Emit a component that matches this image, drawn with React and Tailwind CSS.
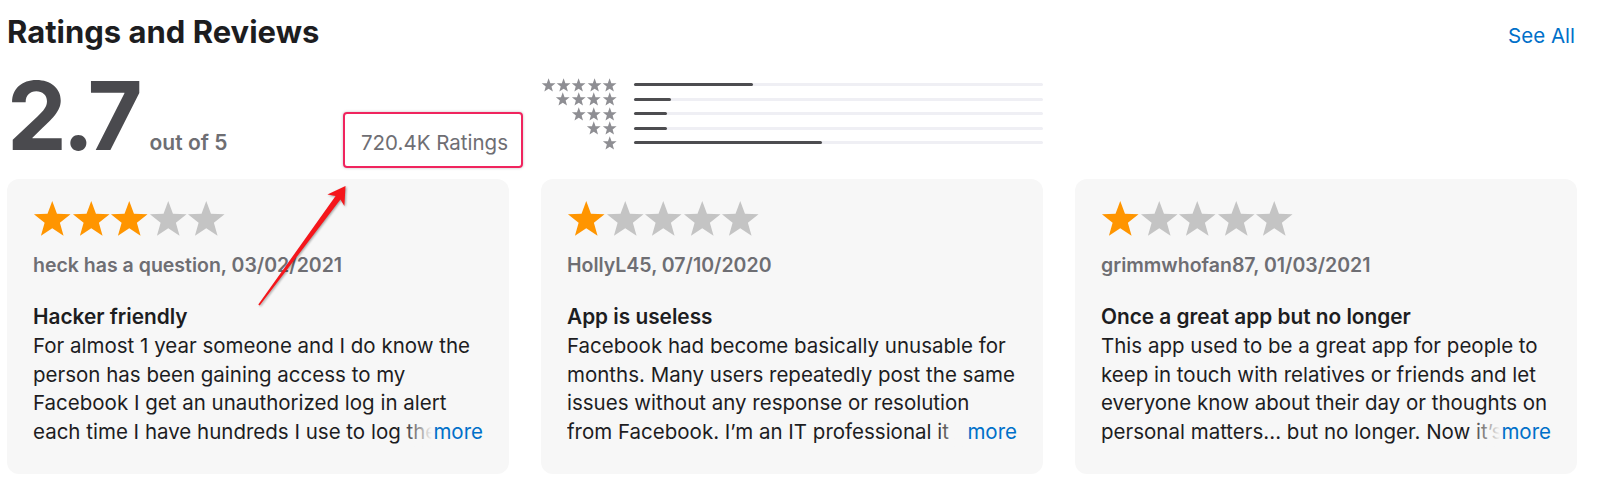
import React from 'react';

// five-point star used by the histogram and the review cards
const STAR_PATH =
  'M12 0.6L14.94 8.56L23.41 8.89L16.76 14.15L19.05 22.31L12 17.6L4.95 22.31L7.24 14.15L0.59 8.89L9.06 8.56Z';

const Star = ({ className }) => (
  <svg viewBox="0 0 24 24" className={className}>
    <path d={STAR_PATH} fill="currentColor" />
  </svg>
);

const histogram = [
  { stars: 5, pct: 29 },
  { stars: 4, pct: 9 },
  { stars: 3, pct: 8 },
  { stars: 2, pct: 8 },
  { stars: 1, pct: 46 },
];

const reviews = [
  {
    rating: 3,
    author: 'heck has a question',
    date: '03/02/2021',
    title: 'Hacker friendly',
    lines: [
      'For almost 1 year someone and I do know the',
      'person has been gaining access to my',
      'Facebook I get an unauthorized log in alert',
      'each time I have hundreds I use to log them',
    ],
  },
  {
    rating: 1,
    author: 'HollyL45',
    date: '07/10/2020',
    title: 'App is useless',
    lines: [
      'Facebook had become basically unusable for',
      'months. Many users repeatedly post the same',
      'issues without any response or resolution',
      'from Facebook. I\u2019m an IT professional it',
    ],
  },
  {
    rating: 1,
    author: 'grimmwhofan87',
    date: '01/03/2021',
    title: 'Once a great app but no longer',
    lines: [
      'This app used to be a great app for people to',
      'keep in touch with relatives or friends and let',
      'everyone know about their day or thoughts on',
      'personal matters... but no longer. Now it\u2019s',
    ],
  },
];

const ReviewCard = ({ review }) => {
  const { rating, author, date, title, lines } = review;
  const last = lines.length - 1;

  return (
    <div className="h-[295px] rounded-[12px] bg-[#f7f7f7] px-[26px] pt-[21px]">
      <div className="flex">
        {[1, 2, 3, 4, 5].map((n) => (
          <Star
            key={n}
            className={`w-[38.5px] h-[38.5px] ${n <= rating ? 'text-[#ff9500]' : 'text-[#c4c4c4]'}`}
          />
        ))}
      </div>
      <div className="mt-[12px] text-[19.5px] leading-[28.7px] font-semibold text-[#6e6e73]">
        {author}, {date}
      </div>
      <div className="mt-[24px] text-[20.8px] leading-[28.7px] font-semibold text-[#1d1d1f]">
        {title}
      </div>
      <div className="text-[20.5px] leading-[28.7px] text-[#1d1d1f]">
        {lines.map((line, i) =>
          i === last ? (
            <div key={i} className="flex">
              {/* last line is cut off and fades out before "more" */}
              <span className="relative flex-1 min-w-0 overflow-hidden whitespace-nowrap">
                {line}
                <span className="absolute right-0 top-0 h-full w-[30px] bg-linear-to-r from-[#f7f7f7]/0 to-[#f7f7f7]" />
              </span>
              <span className="pl-[1px] text-[#0070c9]">more</span>
            </div>
          ) : (
            <div key={i} className="whitespace-nowrap overflow-hidden">
              {line}
            </div>
          )
        )}
      </div>
    </div>
  );
};

const App = () => {
  return (
    <div className="relative w-[1600px] h-[490px] overflow-hidden bg-white font-[Inter,sans-serif]">
      <div className="ml-[7px] w-[1570px]">
        {/* Header */}
        <div className="flex items-baseline justify-between pt-[14px]">
          <h2 className="text-[31px] leading-[36px] font-bold text-[#1d1d1f]">Ratings and Reviews</h2>
          <a className="mr-[2px] text-[20.5px] leading-[32px] text-[#0070c9]">See All</a>
        </div>

        {/* Summary row */}
        <div className="grid grid-cols-[502px_502px_502px] gap-x-[32px] mt-[15.5px]">
          <div className="flex items-baseline">
            <span className="text-[95px] leading-[95px] font-bold tracking-[-0.045em] text-[#4a4a4e]">2.7</span>
            <span className="ml-[11px] text-[21px] font-semibold text-[#6e6e73]">out of 5</span>
            <span className="ml-auto mr-[1px] text-[20.5px] text-[#6e6e73]">720.4K Ratings</span>
          </div>

          <div className="flex pt-[10px]">
            <div className="w-[76px] flex flex-col">
              {histogram.map((row) => (
                <div key={row.stars} className="h-[14.5px] flex justify-end">
                  {Array.from({ length: row.stars }).map((_, i) => (
                    <Star key={i} className="w-[15.5px] h-[14.5px] text-[#8e8e93]" />
                  ))}
                </div>
              ))}
            </div>
            <div className="flex-1 ml-[17px] flex flex-col">
              {histogram.map((row) => (
                <div key={row.stars} className="h-[14.5px] flex items-center">
                  <div className="w-full h-[3px] rounded-full bg-[#efeff4]">
                    <div
                      className="h-full rounded-full bg-[#4d4d50]"
                      style={{ width: `${row.pct}%` }}
                    />
                  </div>
                </div>
              ))}
            </div>
          </div>

          <div />
        </div>

        {/* Review cards */}
        <div className="grid grid-cols-[502px_502px_502px] gap-x-[32px] mt-[16.5px]">
          {reviews.map((review) => (
            <ReviewCard key={review.author} review={review} />
          ))}
        </div>
      </div>

      {/* Annotation: highlight box */}
      <div className="absolute left-[343px] top-[112px] w-[180px] h-[56px] rounded-[4px] border-2 border-[#f0245e] shadow-[0_0_3px_rgba(0,0,0,0.25)] pointer-events-none" />

      {/* Annotation: arrow */}
      <svg
        className="absolute left-0 top-0 pointer-events-none drop-shadow-[1px_1px_1px_rgba(0,0,0,0.35)]"
        width="1600"
        height="490"
        viewBox="0 0 1600 490"
      >
        <polygon
          points="345.5,186 344.4,206 340.4,199.5 259.7,305.4 258.3,304.6 335.6,196 327.4,194.6"
          fill="#f5161b"
        />
      </svg>
    </div>
  );
};

export default App;
